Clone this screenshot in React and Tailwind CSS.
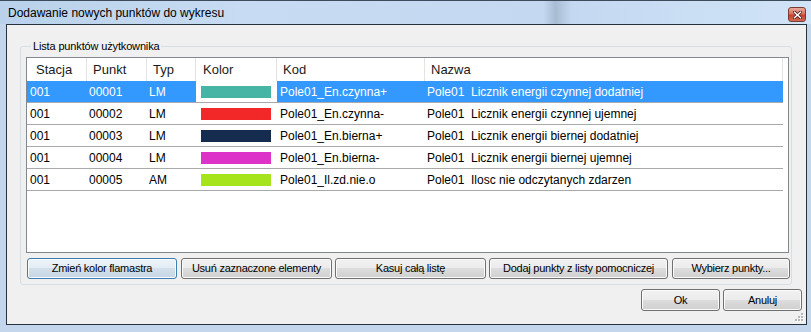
import React from "react";

const points = [
  { st: "001", pt: "00001", typ: "LM", color: "#47b5a5", kod: "Pole01_En.czynna+", nazwa: "Pole01  Licznik energii czynnej dodatniej" },
  { st: "001", pt: "00002", typ: "LM", color: "#f22727", kod: "Pole01_En.czynna-", nazwa: "Pole01  Licznik energii czynnej ujemnej" },
  { st: "001", pt: "00003", typ: "LM", color: "#152c4e", kod: "Pole01_En.bierna+", nazwa: "Pole01  Licznik energii biernej dodatniej" },
  { st: "001", pt: "00004", typ: "LM", color: "#dd33c8", kod: "Pole01_En.bierna-", nazwa: "Pole01  Licznik energii biernej ujemnej" },
  { st: "001", pt: "00005", typ: "AM", color: "#a5e31b", kod: "Pole01_Il.zd.nie.o", nazwa: "Pole01  Ilosc nie odczytanych zdarzen" },
];

const columns = [
  { label: "Stacja", w: "w-[60px]", pad: "pl-[9px]" },
  { label: "Punkt", w: "w-[60px]", pad: "pl-[6px]" },
  { label: "Typ", w: "w-[49px]", pad: "pl-[6px]" },
  { label: "Kolor", w: "w-[81px]", pad: "pl-[7px]" },
  { label: "Kod", w: "w-[148px]", pad: "pl-[6px]" },
  { label: "Nazwa", w: "w-[358px]", pad: "pl-[6px]" },
];

const Button = ({ children, width, focused }) => (
  <button
    className={`${width} h-full rounded-[3px] border text-[11px] tracking-[-0.25px] text-black shadow-[inset_0_0_0_1px_#fbfbfb] ${
      focused
        ? "border-[#3c7fb1] bg-[linear-gradient(to_bottom,#eef4f9_0%,#e2ebf3_50%,#d3e0ec_50%,#c6d6e5_100%)]"
        : "border-[#707070] bg-[linear-gradient(to_bottom,#f2f2f2_0%,#ebebeb_50%,#dddddd_50%,#cfcfcf_100%)]"
    }`}
  >
    {children}
  </button>
);

const CloseButton = () => (
  <div className="mt-[6px] mr-[1px] w-[18px] h-[15px] rounded-[3px] border border-[#7d3a35] bg-[linear-gradient(to_bottom,#eaa99b_0%,#d77261_45%,#c3432f_55%,#d36a52_100%)] flex items-center justify-center">
    <svg width="9" height="8" viewBox="0 0 9 8">
      <path d="M1.5 1.2 L7.5 6.8 M7.5 1.2 L1.5 6.8" stroke="#4a1a14" strokeWidth="3" strokeLinecap="square" />
      <path d="M1.5 1.2 L7.5 6.8 M7.5 1.2 L1.5 6.8" stroke="#ffffff" strokeWidth="1.5" strokeLinecap="square" />
    </svg>
  </div>
);

const Grip = () => (
  <svg className="absolute right-[2px] bottom-[2px]" width="10" height="10" viewBox="0 0 10 10">
    {[
      [7, 1],
      [7, 4],
      [4, 4],
      [7, 7],
      [4, 7],
      [1, 7],
    ].map(([x, y]) => (
      <g key={`${x}-${y}`}>
        <rect x={x + 1} y={y + 1} width="2" height="2" fill="#ffffff" />
        <rect x={x} y={y} width="2" height="2" fill="#b4b8bd" />
      </g>
    ))}
  </svg>
);

export default function App() {
  return (
    <div className="w-[811px] h-[332px] flex flex-col overflow-hidden border-t border-[#3c4c5c] bg-[#c3d6eb] pl-[6px] pr-[4px] pb-[7px] font-['Liberation_Sans',Arial,sans-serif] text-black">
      {/* title bar */}
      <div className="-ml-[6px] -mr-[4px] pl-[6px] pr-[4px] h-[23px] flex items-start justify-between bg-[linear-gradient(90deg,#b9d1ea_0%,#c7dcf3_30%,#c4d9f1_67%,#a8bcd3_68.5%,#c4d9f1_70.5%,#d0e3f7_100%)]">
        <span className="pl-[2px] pt-[5px] text-[12px] leading-[15px]">Dodawanie nowych punktów do wykresu</span>
        <CloseButton />
      </div>

      {/* client area */}
      <div className="relative flex-1 flex flex-col border border-[#26323e] bg-[#f0f0f0]">
        <div className="relative mt-[21px] ml-[13px] w-[772px] h-[239px] rounded-[3px] border border-[#d5dfe5] flex flex-col">
          <span className="absolute left-[10px] -top-[8px] px-[2px] bg-[#f0f0f0] text-[11px] leading-[14px] tracking-[-0.15px]">
            Lista punktów użytkownika
          </span>

          <div className="mt-[10px] ml-[5px] w-[763px] h-[196px] border border-[#828790] bg-white">
            <div className="h-[23px] flex">
              {columns.map((c) => (
                <div
                  key={c.label}
                  className={`${c.w} ${c.pad} h-full flex items-center border-r border-[#e3e3e3] text-[13px] text-[#1a1a1a]`}
                >
                  {c.label}
                </div>
              ))}
            </div>
            <div className="w-[756px]">
              {points.map((p, i) => {
                const sel = i === 0;
                return (
                  <div
                    key={p.pt}
                    className={`h-[22px] flex border-b border-[#a9a9a9] text-[12px] whitespace-pre ${
                      sel ? "bg-[#3399ff] text-white" : "text-black"
                    }`}
                  >
                    <div className="w-[60px] pl-[3px] flex items-center">{p.st}</div>
                    <div className="w-[60px] pl-[2px] flex items-center">{p.pt}</div>
                    <div className="w-[49px] pl-[2px] flex items-center">{p.typ}</div>
                    <div className="w-[81px] flex items-center bg-white">
                      <div className="ml-[5px] w-[70px] h-[12px]" style={{ backgroundColor: p.color }} />
                    </div>
                    <div className="w-[148px] pl-[3px] flex items-center">{p.kod}</div>
                    <div className="w-[358px] pl-[2px] flex items-center">{p.nazwa}</div>
                  </div>
                );
              })}
            </div>
          </div>

          <div className="mt-[5px] ml-[6px] h-[21px] flex">
            <Button width="w-[150px]" focused>
              Zmień kolor flamastra
            </Button>
            <div className="w-[4px]" />
            <Button width="w-[151px]">Usuń zaznaczone elementy</Button>
            <div className="w-[3px]" />
            <Button width="w-[151px]">Kasuj całą listę</Button>
            <div className="w-[3px]" />
            <Button width="w-[179px]">Dodaj punkty z listy pomocniczej</Button>
            <div className="w-[4px]" />
            <Button width="w-[118px]">Wybierz punkty...</Button>
          </div>
        </div>

        <div className="mt-[4px] pr-[4px] h-[22px] flex justify-end gap-[3px]">
          <Button width="w-[79px]">Ok</Button>
          <Button width="w-[79px]">Anuluj</Button>
        </div>

        <Grip />
      </div>
    </div>
  );
}
